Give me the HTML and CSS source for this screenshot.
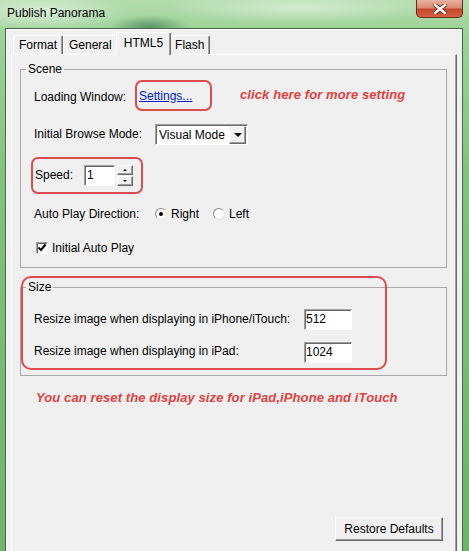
FILE: index.html
```html
<!DOCTYPE html>
<html lang="en">

<head>
    <meta charset="UTF-8">
    <title>Publish Panorama</title>
    <link rel="stylesheet" href="styles.css">
</head>

<body>
    <div class="titlebar">
        <span class="title">Publish Panorama</span>
        <div class="close">
            <svg width="14" height="10" viewBox="0 0 14 10">
                <path d="M2 1 L12 9 M12 1 L2 9" stroke="#6a2418" stroke-width="4.2" stroke-linecap="square" />
                <path d="M2 1 L12 9 M12 1 L2 9" stroke="#fff" stroke-width="2.4" stroke-linecap="square" />
            </svg>
        </div>
    </div>
    <div class="client">
        <div class="tabs">
            <div class="tab">Format</div>
            <div class="tab">General</div>
            <div class="tab active">HTML5</div>
            <div class="tab">Flash</div>
        </div>
        <div class="page">
            <fieldset class="group">
                <legend>Scene</legend>
                <div class="row row-loading">
                    <span class="lbl w101">Loading Window:</span>
                    <span class="mark mark-settings"><a href="#" class="link">Settings...</a></span>
                    <span class="note note-click">click here for more setting</span>
                </div>
                <div class="row row-browse">
                    <span class="lbl w121">Initial Browse Mode:</span>
                    <div class="select">
                        <span class="select-text">Visual Mode</span>
                        <span class="select-btn"><span class="tri"></span></span>
                    </div>
                </div>
                <div class="row row-speed">
                    <div class="mark mark-speed">
                        <span class="lbl w49">Speed:</span>
                        <div class="field field-speed">1</div>
                        <div class="spin">
                            <span class="spin-btn"><span class="tri-up"></span></span>
                            <span class="spin-btn"><span class="tri-down"></span></span>
                        </div>
                    </div>
                </div>
                <div class="row row-dir">
                    <span class="lbl w121">Auto Play Direction:</span>
                    <label class="option"><span class="radio checked"></span>Right</label>
                    <label class="option"><span class="radio"></span>Left</label>
                </div>
                <div class="row row-auto">
                    <label class="option check-option">
                        <span class="checkbox">
                            <svg width="10" height="9" viewBox="0 0 10 9">
                                <path d="M1.5 4.5 L4 7 L8.5 1.5" stroke="#000" stroke-width="2" fill="none" />
                            </svg>
                        </span>Initial Auto Play
                    </label>
                </div>
            </fieldset>

            <div class="size-wrap">
                <fieldset class="group size">
                    <legend>Size</legend>
                    <div class="size-grid">
                        <span class="lbl">Resize image when displaying in iPhone/iTouch:</span>
                        <div class="field field-size">512</div>
                        <span class="lbl">Resize image when displaying in iPad:</span>
                        <div class="field field-size ipad">1024</div>
                    </div>
                </fieldset>
                <div class="mark mark-size"></div>
            </div>

            <p class="note note-reset">You can reset the display size for iPad,iPhone and iTouch</p>

            <button class="btn">Restore Defaults</button>
        </div>
    </div>
</body>

</html>
```

FILE: styles.css
```css
:root {
    --face: #f0f0f0;
    --shadow: #a0a0a0;
    --dark: #696969;
    --red: #dd4a4f;
    --note: #e2413f;
}

* {
    box-sizing: border-box;
}

body {
    margin: 0;
    width: 469px;
    height: 551px;
    overflow: hidden;
    font-family: "Liberation Sans", Arial, sans-serif;
    font-size: 12px;
    color: #000;
    background:
        radial-gradient(ellipse 40px 12px at 150px 27px, rgba(40, 110, 70, .6), transparent),
        radial-gradient(ellipse 140px 16px at 300px 8px, rgba(255, 255, 255, .45), transparent),
        radial-gradient(ellipse 90px 20px at 40px 12px, rgba(255, 255, 255, .55), transparent),
        linear-gradient(180deg, #b4dcae 0, #9cd397 30px, #80c37c 180px, #6bb567 100%);
}

/* window chrome */
.titlebar {
    height: 28px;
    display: flex;
    justify-content: space-between;
    align-items: flex-start;
}

.title {
    margin: 6px 0 0 7px;
    line-height: 14px;
}

.close {
    width: 47px;
    height: 18px;
    margin-right: 6px;
    border: 1px solid #6b2a1e;
    border-top: 0;
    border-radius: 0 0 5px 5px;
    background: linear-gradient(180deg, #eab2a2 0, #dc8a72 45%, #c4482d 55%, #d4603f 100%);
    display: flex;
    align-items: center;
    justify-content: center;
}

.client {
    margin-left: 5px;
    width: 458px;
    height: 540px;
    background: var(--face);
    border: 1px solid #47674a;
    border-bottom: 0;
    box-shadow: inset 1px 1px 0 #fff;
    padding: 3px 5px 0;
}

/* tabs */
.tabs {
    display: flex;
    align-items: flex-end;
    height: 22px;
    padding-left: 2px;
}

.tab {
    height: 19px;
    padding: 0 5px;
    line-height: 19px;
    background: var(--face);
    border-top: 1px solid #fff;
    border-left: 1px solid #fff;
    border-right: 1px solid var(--dark);
    box-shadow: inset -1px 0 0 var(--shadow);
    border-radius: 2px 2px 0 0;
}

.tab.active {
    position: relative;
    z-index: 1;
    height: 23px;
    margin: 0 -2px -1px;
    padding: 0 7px;
    line-height: 20px;
}

.page {
    height: 505px;
    border: 1px solid #fff;
    border-right-color: var(--dark);
    border-bottom-color: var(--dark);
    box-shadow: inset -1px -1px 0 var(--shadow);
    padding: 7px 9px 17px 8px;
    display: flex;
    flex-direction: column;
}

/* group boxes */
.group {
    margin: 0;
    padding: 0 0 0 13px;
    min-width: 0;
    border: 1px solid #a9a9a9;
}

.group legend {
    padding: 0 2px;
    margin-left: -8px;
    line-height: 14px;
}

.row {
    display: flex;
    align-items: center;
}

.row-loading { height: 42px; }
.row-browse { height: 32px; }
.row-speed { height: 50px; }
.row-dir { height: 28px; }
.row-auto { height: 39px; }

.lbl {
    white-space: nowrap;
}

.w101 { width: 101px; }
.w121 { width: 121px; }
.w49 { width: 49px; }

/* red annotation marks */
.mark {
    border: 2px solid var(--red);
    border-radius: 7px;
    display: flex;
    align-items: center;
}

.mark-settings {
    width: 77px;
    height: 31px;
    padding-left: 2px;
    margin-bottom: 3px;
}

.mark-speed {
    width: 112px;
    height: 37px;
    margin-left: -3px;
    padding-left: 2px;
}

.mark-size {
    position: absolute;
    left: 1px;
    top: -4px;
    width: 366px;
    height: 94px;
    border-radius: 10px;
    pointer-events: none;
}

.link {
    color: #0020c8;
    text-decoration: underline;
}

.note {
    font-size: 13px;
    font-weight: bold;
    font-style: italic;
    color: var(--note);
    white-space: nowrap;
}

.note-click {
    margin: 0 0 6px 28px;
    letter-spacing: 0.1px;
}

.note-reset {
    margin: 14px 0 0 16px;
    line-height: 15px;
    letter-spacing: 0.1px;
}

/* controls */
.field {
    height: 21px;
    background: #fff;
    border: 1px solid;
    border-color: var(--shadow) #fff #fff var(--shadow);
    box-shadow: inset 1px 1px 0 var(--dark);
    padding-left: 2px;
    line-height: 19px;
}

.field-speed {
    width: 31px;
}

.field-size {
    width: 48px;
    padding-left: 1px;
}

.spin {
    display: flex;
    flex-direction: column;
    gap: 1px;
    margin-left: 2px;
}

.spin-btn,
.select-btn {
    display: flex;
    align-items: center;
    justify-content: center;
    background: var(--face);
    border: 1px solid;
    border-color: #fff var(--dark) var(--dark) #fff;
    box-shadow: inset -1px -1px 0 var(--shadow);
}

.spin-btn {
    width: 16px;
    height: 10px;
}

.tri-up,
.tri-down {
    border-left: 2px solid transparent;
    border-right: 2px solid transparent;
}

.tri-up {
    border-bottom: 2px solid #000;
}

.tri-down {
    border-top: 2px solid #000;
}

.select {
    width: 93px;
    height: 21px;
    display: flex;
    align-items: center;
    justify-content: space-between;
    background: #fff;
    border: 1px solid;
    border-color: var(--shadow) #fff #fff var(--shadow);
    box-shadow: inset 1px 1px 0 var(--dark);
    padding: 1px 1px 0 3px;
}

.select-btn {
    width: 17px;
    height: 18px;
}

.tri {
    border-left: 4px solid transparent;
    border-right: 4px solid transparent;
    border-top: 4px solid #000;
}

.option {
    display: flex;
    align-items: center;
    gap: 4px;
    margin-right: 14px;
}

.radio {
    width: 12px;
    height: 12px;
    border-radius: 50%;
    background: #fff;
    border: 1px solid;
    border-color: #8c8c8c #e4e4e4 #e4e4e4 #8c8c8c;
    display: flex;
    align-items: center;
    justify-content: center;
}

.radio.checked::after {
    content: "";
    width: 4px;
    height: 4px;
    border-radius: 50%;
    background: #000;
}

.check-option {
    margin-left: 2px;
}

.checkbox {
    width: 12px;
    height: 12px;
    background: #fff;
    border: 1px solid;
    border-color: var(--shadow) #fff #fff var(--shadow);
    box-shadow: inset 1px 1px 0 var(--dark);
    display: flex;
    align-items: center;
    justify-content: center;
}

/* size group */
.size-wrap {
    position: relative;
    margin-top: 12px;
}

.size {
    padding: 8px 0 9px 13px;
}

.size-grid {
    display: grid;
    grid-template-columns: 270px 48px;
    grid-template-rows: 34px 30px;
    align-items: center;
}

.ipad {
    margin-top: 2px;
}

.btn {
    margin: auto 4px 0 0;
    align-self: flex-end;
    width: 108px;
    height: 24px;
    font-family: inherit;
    font-size: 12px;
    color: #000;
    background: var(--face);
    border: 1px solid;
    border-color: #fff var(--dark) var(--dark) #fff;
    box-shadow: inset -1px -1px 0 var(--shadow);
    padding: 0;
}
```
